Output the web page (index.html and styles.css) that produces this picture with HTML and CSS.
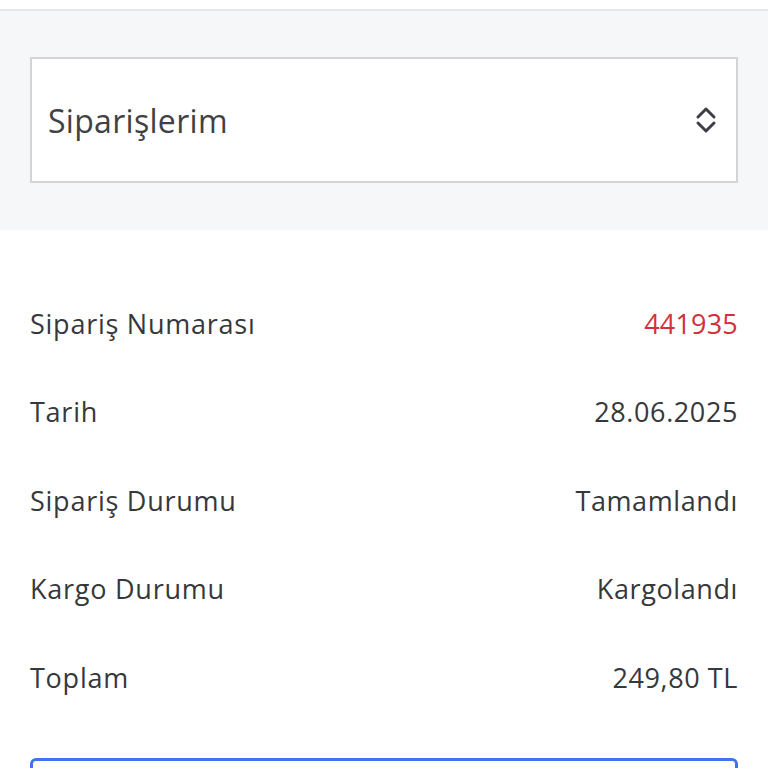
FILE: index.html
```html
<!DOCTYPE html>
<html lang="tr">
<head>
<meta charset="utf-8">
<link rel="stylesheet" href="styles.css">
</head>
<body>
<div class="topbar"></div>
<section class="filter">
  <div class="select">
    <span class="select-label">Siparişlerim</span>
    <svg class="chevrons" width="24" height="28" viewBox="0 0 24 28" fill="none" stroke="#3d3f44" stroke-width="3" stroke-linecap="round" stroke-linejoin="round">
      <path d="M4 11 L12 3 L20 11"/>
      <path d="M4 17 L12 25 L20 17"/>
    </svg>
  </div>
</section>
<section class="details">
  <div class="row"><span class="label">Sipariş Numarası</span><span class="value red">441935</span></div>
  <div class="row"><span class="label">Tarih</span><span class="value">28.06.2025</span></div>
  <div class="row"><span class="label">Sipariş Durumu</span><span class="value">Tamamlandı</span></div>
  <div class="row"><span class="label">Kargo Durumu</span><span class="value">Kargolandı</span></div>
  <div class="row"><span class="label">Toplam</span><span class="value">249,80 TL</span></div>
  <div class="button"></div>
</section>
</body>
</html>
```
FILE: styles.css
```css
html, body {
  margin: 0;
  padding: 0;
  background: #ffffff;
  font-family: "Open Sans", "Liberation Sans", sans-serif;
  color: #36383b;
}
.topbar {
  height: 9px;
  background: #ffffff;
  border-bottom: 2px solid #e7e8ea;
}
.filter {
  background: #f6f7f9;
  padding: 46px 30px 47px;
}
.select {
  height: 122px;
  background: #ffffff;
  border: 2px solid #d3d4d7;
  display: flex;
  align-items: center;
  justify-content: space-between;
  padding: 0 16px 0 16px;
}
.select-label {
  font-size: 32px;
  color: #3f4145;
  letter-spacing: 0.3px;
}
.chevrons {
  display: block;
  margin-right: 2px;
}
.details {
  padding: 49px 30px 0;
}
.row {
  height: 88.5px;
  display: flex;
  align-items: center;
  justify-content: space-between;
  font-size: 27px;
}
.label {
  letter-spacing: 0.75px;
}
.value {
  letter-spacing: 0.6px;
}
.value.red {
  color: #d4303a;
  letter-spacing: 0.2px;
}
.button {
  margin-top: 36px;
  height: 60px;
  border: 3px solid #3f74ee;
  border-radius: 6px;
}
```
